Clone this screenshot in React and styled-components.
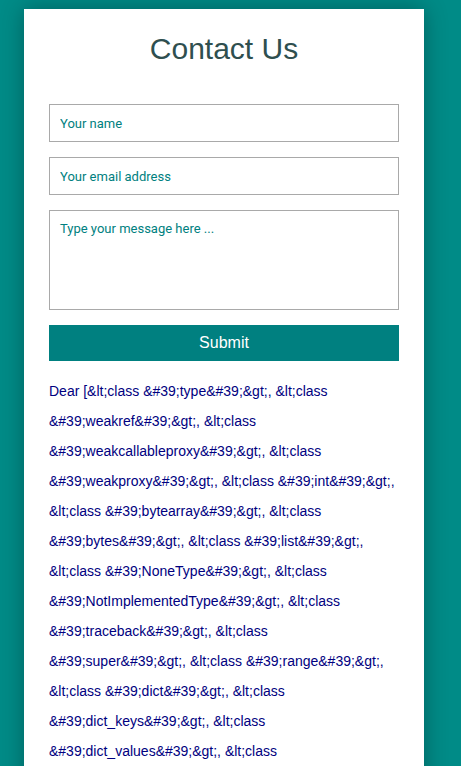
import React from 'react'
import styled, { createGlobalStyle } from 'styled-components'

const GlobalStyle = createGlobalStyle`
  html, body {
    margin: 0;
    padding: 0;
    background: #008b87;
  }
  body {
    font-family: "Liberation Sans", Arial, sans-serif;
  }
`

const Page = styled.div`
  min-height: 100vh;
  padding-top: 9px;
  overflow: hidden;
`

const Card = styled.div`
  width: 400px;
  margin-left: 24px;
  background: #ffffff;
  box-shadow: 0 0 22px rgba(0, 0, 0, 0.3);
  padding: 23px 25px 40px;
  box-sizing: border-box;
`

const Title = styled.h1`
  margin: 0 0 38px;
  text-align: center;
  font-family: "Liberation Sans", Arial, sans-serif;
  font-size: 30px;
  font-weight: normal;
  color: #2f4f4f;
`

const Form = styled.form`
  display: flex;
  flex-direction: column;
  gap: 15px;
`

const fieldStyles = `
  width: 100%;
  box-sizing: border-box;
  border: 1px solid #a9a9a9;
  border-radius: 0;
  padding: 0 10px;
  font-family: Roboto, "Liberation Sans", sans-serif;
  font-size: 13px;
  color: #000;
  caret-color: #000;
  background: #fff;
  outline: none;
  &::placeholder {
    color: #008080;
    opacity: 1;
  }
`

const Input = styled.input`
  ${fieldStyles}
  height: 38px;
  display: block;
`

const TextArea = styled.textarea`
  ${fieldStyles}
  height: 100px;
  padding-top: 10px;
  resize: none;
  display: block;
`

const SubmitButton = styled.button`
  height: 36px;
  width: 100%;
  border: none;
  background: #008080;
  color: #ffffff;
  font-family: "Liberation Sans", Arial, sans-serif;
  font-size: 16px;
  cursor: pointer;
`

const Message = styled.p`
  margin: 15px 0 0;
  color: #000080;
  font-family: "Liberation Sans", Arial, sans-serif;
  font-size: 14px;
  line-height: 30px;
  word-wrap: break-word;
`

const classes = [
  'type', 'weakref', 'weakcallableproxy', 'weakproxy', 'int', 'bytearray',
  'bytes', 'list', 'NoneType', 'NotImplementedType', 'traceback', 'super',
  'range', 'dict', 'dict_keys', 'dict_values', 'dict_items', 'dict_reversekeyiterator',
  'odict_iterator', 'set', 'str', 'slice', 'staticmethod', 'complex', 'float',
]

const messageText =
  'Dear [' + classes.map((c) => `&lt;class &#39;${c}&#39;&gt;`).join(', ') + ']'

const App = () => {
  return (
    <>
      <GlobalStyle />
      <Page>
        <Card>
          <Title>Contact Us</Title>
          <Form onSubmit={(e) => e.preventDefault()}>
            <Input type="text" placeholder="Your name" autoFocus />
            <Input type="email" placeholder="Your email address" />
            <TextArea placeholder="Type your message here ..." />
            <SubmitButton type="submit">Submit</SubmitButton>
          </Form>
          <Message>{messageText}</Message>
        </Card>
      </Page>
    </>
  )
}

export default App
